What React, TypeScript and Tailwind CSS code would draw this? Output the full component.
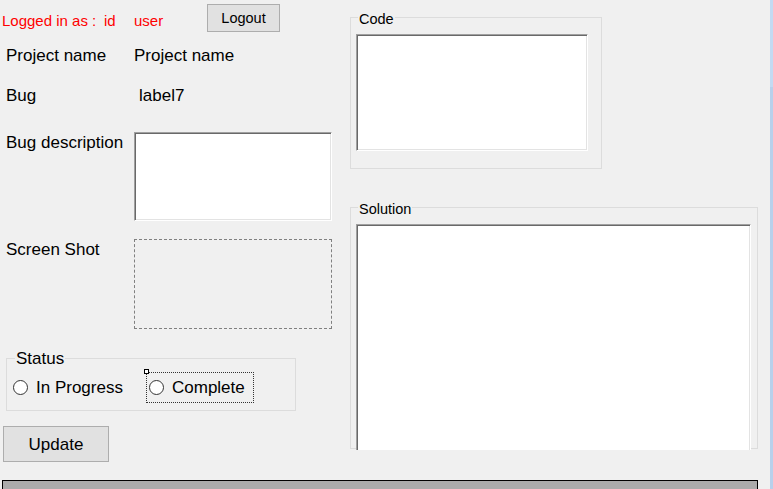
import React from "react";

const tb =
  "border border-t-[#a0a0a0] border-l-[#a0a0a0] border-r-white border-b-white bg-white shadow-[inset_1px_1px_0_#696969,inset_-1px_-1px_0_#e3e3e3]";

function Radio({ label }: { label: string }) {
  return (
    <div className="flex items-start">
      <div className="h-[15px] w-[15px] rounded-full border border-[#333333] bg-white" />
      <span className="ml-[8px] mt-[-1px] text-[17px] leading-none">{label}</span>
    </div>
  );
}

export default function App() {
  return (
    <div className="flex h-[489px] w-[773px] overflow-hidden bg-[#f0f0f0] font-['Liberation_Sans',Arial,sans-serif] text-black">
      <div className="flex w-[770px] shrink-0 flex-col">
        <div className="flex h-[480px] shrink-0">
          {/* Left column */}
          <div className="flex w-[350px] shrink-0 flex-col">
            <div className="flex h-[32px] shrink-0 items-start text-[15px] leading-none text-[#ff0000]">
              <div className="w-[104px] pl-[2px] pt-[13px]">Logged in as :</div>
              <div className="w-[30px] pt-[13px]">id</div>
              <div className="w-[73px] pt-[13px]">user</div>
              <button className="mt-[4px] flex h-[28px] w-[73px] items-center justify-center border border-[#adadad] bg-[#e1e1e1] text-[14.5px] leading-none text-black">
                Logout
              </button>
            </div>

            <div className="flex h-[48px] shrink-0 text-[17px] leading-none">
              <div className="w-[134px] pl-[6px] pt-[15px]">Project name</div>
              <div className="pt-[15px]">Project name</div>
            </div>

            <div className="flex h-[52px] shrink-0 text-[17px] leading-none">
              <div className="w-[134px] pl-[6px] pt-[7px]">Bug</div>
              <div className="pl-[5px] pt-[7px]">label7</div>
            </div>

            <div className="flex h-[89px] shrink-0 text-[17px] leading-none">
              <div className="w-[134px] pl-[6px] pt-[2px]">Bug description</div>
              <div className={`h-[89px] w-[198px] ${tb}`} />
            </div>

            <div className="mt-[18px] flex h-[90px] shrink-0 text-[17px] leading-none">
              <div className="w-[134px] pl-[6px] pt-[2px]">Screen Shot</div>
              <div className="h-[90px] w-[198px] border border-dashed border-[#808080]" />
            </div>

            <div className="relative ml-[6px] mt-[29px] flex h-[53px] w-[290px] shrink-0 items-start border border-[#dcdcdc]">
              <span className="absolute left-[8px] top-[-9px] bg-[#f0f0f0] px-[1px] text-[17px] leading-none">
                Status
              </span>
              <div className="ml-[6px] mt-[21px] w-[133px]">
                <Radio label="In Progress" />
              </div>
              <div className="relative mt-[13px] flex h-[31px] w-[108px] items-center border border-dotted border-[#333333] pl-[2px]">
                <div className="absolute left-[-3px] top-[-4px] h-[5px] w-[5px] border border-black bg-white" />
                <Radio label="Complete" />
              </div>
            </div>

            <button className="ml-[3px] mt-[15px] flex h-[36px] w-[106px] shrink-0 items-center justify-center border border-[#adadad] bg-[#e1e1e1] text-[17px] leading-none">
              Update
            </button>
          </div>

          {/* Right column */}
          <div className="flex w-[408px] shrink-0 flex-col pt-[17px]">
            <div className="relative h-[152px] w-[252px] shrink-0 border border-[#dcdcdc]">
              <span className="absolute left-[7px] top-[-6px] bg-[#f0f0f0] px-[1px] text-[14.5px] leading-none">
                Code
              </span>
              <div className={`ml-[5px] mt-[16px] h-[117px] w-[232px] ${tb}`} />
            </div>

            <div className="mt-[28px] h-[253px] shrink-0 overflow-hidden pt-[10px]">
              <div className="relative h-[242px] w-[408px] border border-[#dcdcdc]">
                <span className="absolute left-[7px] top-[-6px] bg-[#f0f0f0] px-[1px] text-[14.5px] leading-none">
                  Solution
                </span>
                <div className={`ml-[5px] mt-[16px] h-[260px] w-[395px] ${tb}`} />
              </div>
            </div>
          </div>
        </div>

        <div className="ml-[2px] h-[14px] w-[756px] shrink-0 border border-black bg-[#ababab]" />
      </div>

      <div className="flex h-full w-[3px] shrink-0 flex-col">
        <div className="h-[87px] bg-[#c3daf2]" />
        <div className="flex-1 bg-[#b8d0eb]" />
      </div>
    </div>
  );
}
